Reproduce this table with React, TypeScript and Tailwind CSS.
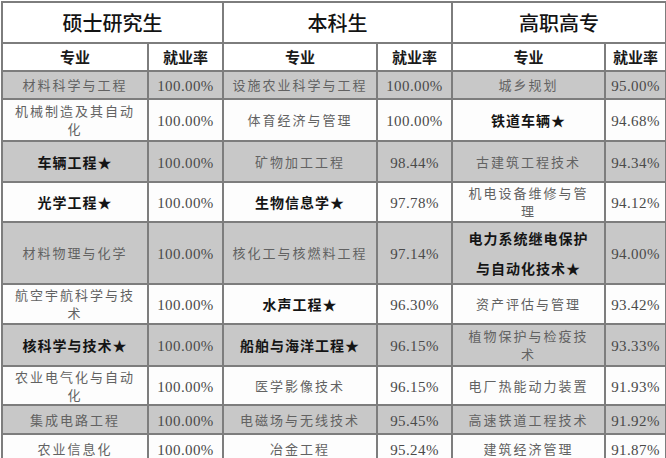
type Cell = { t: string; bold?: boolean; tall?: boolean };
type Row = { h: number; gray: boolean; cells: [Cell, string, Cell, string, Cell, string] };

const rows: Row[] = [
  { h: 28, gray: true, cells: [{ t: "材料科学与工程" }, "100.00%", { t: "设施农业科学与工程" }, "100.00%", { t: "城乡规划" }, "95.00%"] },
  { h: 42, gray: false, cells: [{ t: "机械制造及其自动\n化" }, "100.00%", { t: "体育经济与管理" }, "100.00%", { t: "铁道车辆★", bold: true }, "94.68%"] },
  { h: 41, gray: true, cells: [{ t: "车辆工程★", bold: true }, "100.00%", { t: "矿物加工工程" }, "98.44%", { t: "古建筑工程技术" }, "94.34%"] },
  { h: 40, gray: false, cells: [{ t: "光学工程★", bold: true }, "100.00%", { t: "生物信息学★", bold: true }, "97.78%", { t: "机电设备维修与管\n理" }, "94.12%"] },
  { h: 62, gray: true, cells: [{ t: "材料物理与化学" }, "100.00%", { t: "核化工与核燃料工程" }, "97.14%", { t: "电力系统继电保护\n与自动化技术★", bold: true, tall: true }, "94.00%"] },
  { h: 40, gray: false, cells: [{ t: "航空宇航科学与技\n术" }, "100.00%", { t: "水声工程★", bold: true }, "96.30%", { t: "资产评估与管理" }, "93.42%"] },
  { h: 42, gray: true, cells: [{ t: "核科学与技术★", bold: true }, "100.00%", { t: "船舶与海洋工程★", bold: true }, "96.15%", { t: "植物保护与检疫技\n术" }, "93.33%"] },
  { h: 39, gray: false, cells: [{ t: "农业电气化与自动\n化" }, "100.00%", { t: "医学影像技术" }, "96.15%", { t: "电厂热能动力装置" }, "91.93%"] },
  { h: 29, gray: true, cells: [{ t: "集成电路工程" }, "100.00%", { t: "电磁场与无线技术" }, "95.45%", { t: "高速铁道工程技术" }, "91.92%"] },
  { h: 30, gray: false, cells: [{ t: "农业信息化" }, "100.00%", { t: "冶金工程" }, "95.24%", { t: "建筑经济管理" }, "91.87%"] },
];

const cjk = "font-['Noto_Sans_CJK_SC',sans-serif]";
const td = "border-2 border-[#7d7d7d] text-center align-middle p-0";

function Major({ c }: { c: Cell }) {
  const lines = c.t.split("\n");
  return (
    <td className={td}>
      <div
        className={
          c.bold
            ? `${cjk} font-bold text-[14px] tracking-[1px] text-[#151515] ${c.tall ? "leading-[30px]" : "leading-[18px]"}`
            : `${cjk} text-[13px] tracking-[2px] text-[#626262] leading-[18px]`
        }
      >
        {lines.map((l, i) => (
          <div key={i}>{l}</div>
        ))}
      </div>
    </td>
  );
}

function Rate({ v }: { v: string }) {
  return (
    <td className={td}>
      <span className="font-['Liberation_Serif',serif] text-[15px] leading-[18px] tracking-[0.4px] text-[#4a4a4a]">{v}</span>
    </td>
  );
}

export default function App() {
  return (
    <div className="w-[666px] h-[458px] overflow-hidden bg-white pl-px pt-px">
      <table className="table-fixed border-collapse w-[664px]">
        <colgroup>
          <col className="w-[146px]" />
          <col className="w-[75px]" />
          <col className="w-[154px]" />
          <col className="w-[75px]" />
          <col className="w-[153px]" />
          <col className="w-[61px]" />
        </colgroup>
        <tbody>
          <tr className="h-[41px] bg-white">
            {["硕士研究生", "本科生", "高职高专"].map((t) => (
              <td key={t} colSpan={2} className={`${td} ${cjk} text-[20px] font-medium text-[#141414]`}>
                {t}
              </td>
            ))}
          </tr>
          <tr className="h-[28px] bg-white">
            {[0, 1, 2].flatMap((i) => [
              <td key={`a${i}`} className={`${td} ${cjk} text-[15px] leading-[18px] font-bold text-[#1a1a1a]`}>专业</td>,
              <td key={`b${i}`} className={`${td} ${cjk} text-[15px] leading-[18px] font-bold text-[#1a1a1a]`}>就业率</td>,
            ])}
          </tr>
          {rows.map((r, i) => (
            <tr key={i} style={{ height: r.h }} className={r.gray ? "bg-[#c8c8c8]" : "bg-[#fdfdfd]"}>
              <Major c={r.cells[0]} />
              <Rate v={r.cells[1]} />
              <Major c={r.cells[2]} />
              <Rate v={r.cells[3]} />
              <Major c={r.cells[4]} />
              <Rate v={r.cells[5]} />
            </tr>
          ))}
        </tbody>
      </table>
    </div>
  );
}
